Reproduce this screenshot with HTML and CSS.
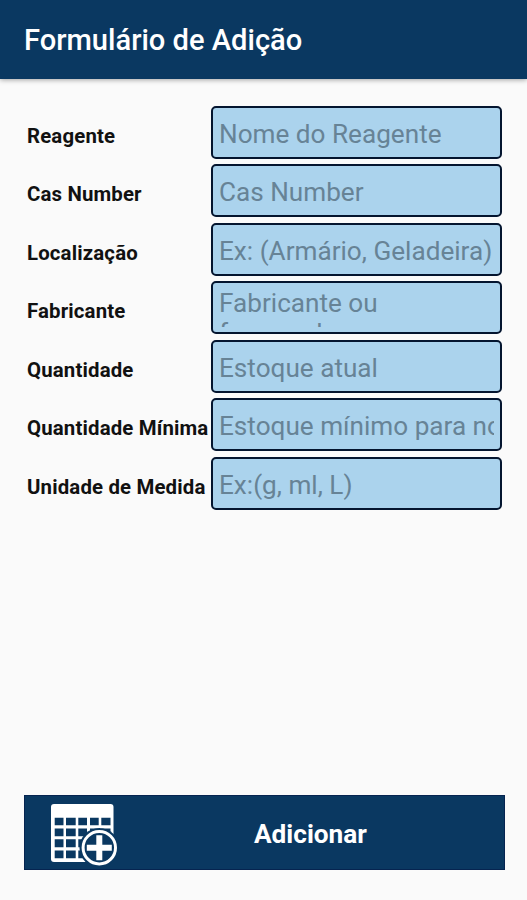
FILE: index.html
```html
<!DOCTYPE html>
<html lang="pt-BR">
<head>
<meta charset="utf-8">
<title>Formulário de Adição</title>
<link rel="stylesheet" href="styles.css">
</head>
<body>
<header class="app-bar"><h1 class="title">Formulário de Adição</h1></header>
<main class="form">
  <div class="row"><span class="label">Reagente</span><div class="field"><span class="hint">Nome do Reagente</span></div></div>
  <div class="row"><span class="label">Cas Number</span><div class="field"><span class="hint">Cas Number</span></div></div>
  <div class="row"><span class="label">Localização</span><div class="field"><span class="hint">Ex: (Armário, Geladeira)</span></div></div>
  <div class="row"><span class="label">Fabricante</span><div class="field"><span class="hint hint-wrap">Fabricante ou fornecedor</span></div></div>
  <div class="row"><span class="label">Quantidade</span><div class="field"><span class="hint">Estoque atual</span></div></div>
  <div class="row"><span class="label">Quantidade Mínima</span><div class="field"><span class="hint">Estoque mínimo para no</span></div></div>
  <div class="row"><span class="label">Unidade de Medida</span><div class="field"><span class="hint">Ex:(g, ml, L)</span></div></div>
</main>
<button class="add">
  <svg class="icon" viewBox="0 0 66 63" width="66" height="63" aria-hidden="true">
    <rect x="0" y="0" width="62.500" height="58" rx="3" fill="#fff"/>
    <g fill="#0a3861">
      <path d="M3.700 13.700h8.800v7.600H3.700zM15 13.700h9.700v7.600H15zM27.300 13.700H36v7.600h-8.700zM39 13.700h8.700v7.600H39zM50.300 13.700h9.200v7.600h-9.200z"/>
      <path d="M3.700 24.500h8.800v7.700H3.700zM15 24.500h9.700v7.700H15zM27.300 24.500H36v7.700h-8.700zM39 24.500h8.700v7.700H39zM50.300 24.500h9.200v7.700h-9.200z"/>
      <path d="M3.700 35.200h8.800v8.100H3.700zM15 35.200h9.700v8.100H15zM27.300 35.200H36v8.100h-8.700zM3.700 46.600h8.800v7.700H3.700zM15 46.600h9.700v7.700H15zM27.300 46.600H36v7.700h-8.700z"/>
      <circle cx="48.300" cy="43.700" r="19.800"/>
    </g>
    <circle cx="48.300" cy="43.700" r="16.200" fill="none" stroke="#fff" stroke-width="3"/>
    <path d="M48.300 31.200v25M35.800 43.700h25" stroke="#fff" stroke-width="6"/>
  </svg>
  <span class="add-text">Adicionar</span>
</button>
</body>
</html>
```
FILE: styles.css
```css
* { box-sizing: border-box; }
body {
  margin: 0;
  height: 900px;
  overflow: hidden;
  display: flex;
  flex-direction: column;
  background: #fafafa;
  font-family: Roboto, "Liberation Sans", sans-serif;
}
.app-bar {
  flex: none;
  height: 79px;
  padding-left: 24px;
  display: flex;
  align-items: center;
  background: #0a3861;
  box-shadow: 0 1px 5px rgba(0, 0, 0, .35);
}
.title {
  margin: 0;
  font-size: 29.1px;
  font-weight: 500;
  line-height: 34px;
  color: #fff;
  white-space: nowrap;
}
.form {
  flex: 1;
  padding: 26.500px 25px 0 27px;
  display: flex;
  flex-direction: column;
  gap: 5.6px;
}
.row {
  display: grid;
  grid-template-columns: 184px 291px;
  align-items: center;
}
.label {
  padding-top: 7px;
  font-size: 20.4px;
  font-weight: 700;
  letter-spacing: .15px;
  line-height: 26px;
  color: #111;
  white-space: nowrap;
}
.field {
  height: 53px;
  padding: 5px 6px;
  border: 2px solid #04152f;
  border-radius: 5px;
  background: #abd3ed;
}
.hint {
  display: block;
  height: 39px;
  overflow: hidden;
  padding-top: 6px;
  font-size: 26.15px;
  line-height: 31px;
  color: #678396;
  white-space: nowrap;
}
.hint-wrap {
  padding-top: 0;
  width: 200px;
  line-height: 30px;
  white-space: normal;
}
.add {
  flex: none;
  height: 75px;
  margin: 0 22px 30px 24px;
  padding: 5px 0 0 26px;
  display: grid;
  grid-template-columns: 66px 1fr;
  align-items: center;
  border: 1px solid #062450;
  background: #0a3861;
  font-family: inherit;
}
.add-text {
  padding: 0 0 3px 137px;
  text-align: left;
  font-size: 26.2px;
  font-weight: 700;
  line-height: 32px;
  color: #fff;
}
```
